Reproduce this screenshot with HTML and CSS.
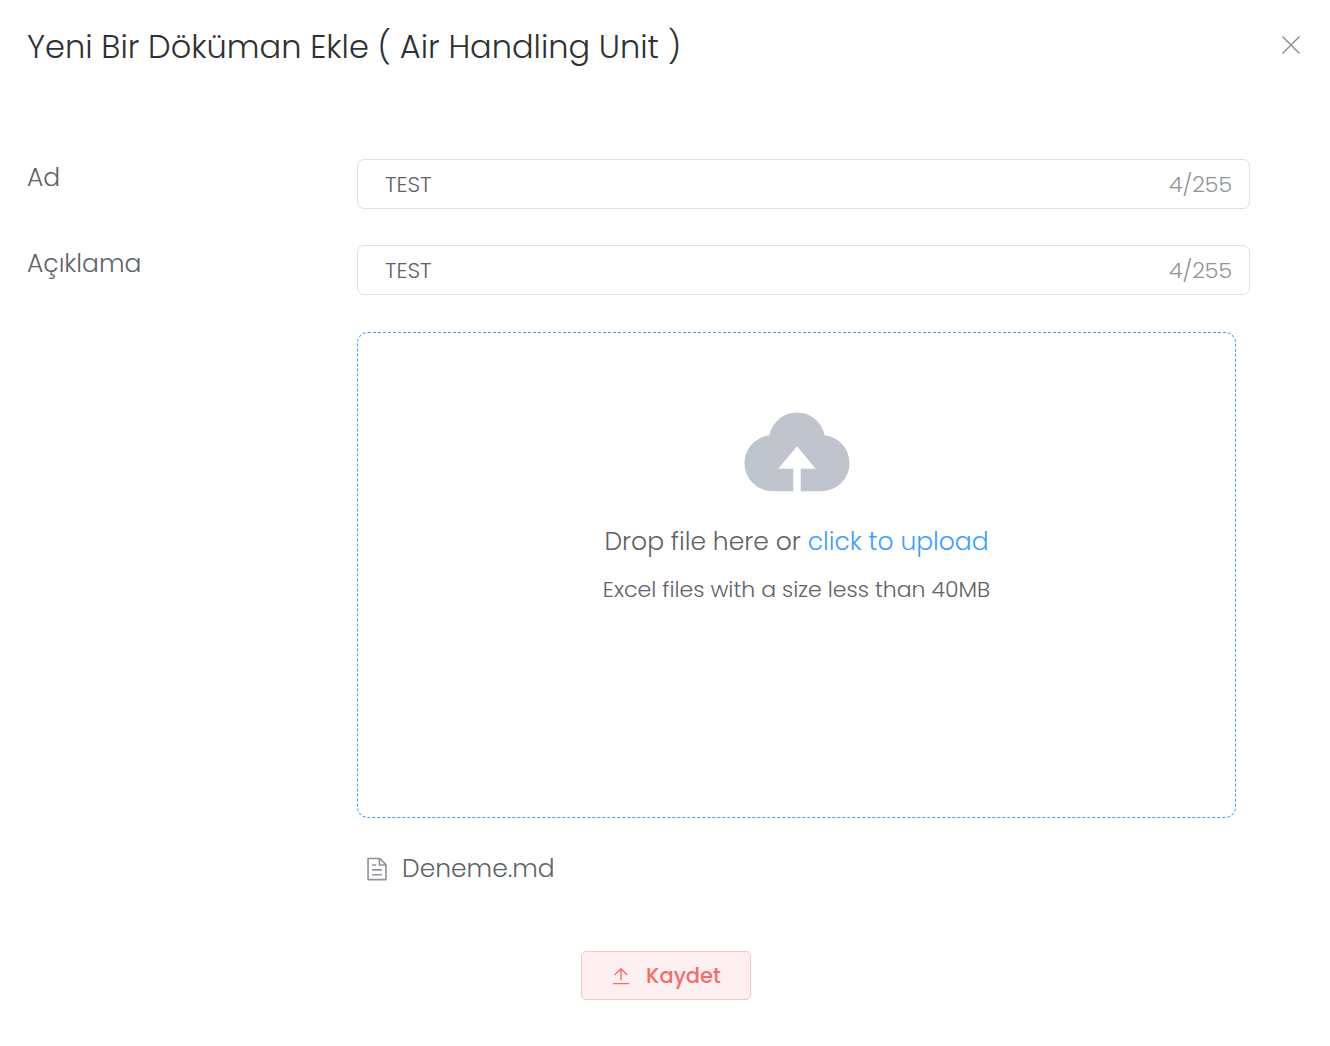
FILE: index.html
```html
<!DOCTYPE html>
<html lang="tr">
<head>
  <meta charset="UTF-8" />
  <meta name="viewport" content="width=device-width, initial-scale=1.0" />
  <title>Yeni Bir Döküman Ekle</title>
  <link rel="stylesheet" href="styles.css">
</head>
<body>
  <header class="dialog-header">
    <h1>Yeni Bir Döküman Ekle ( Air Handling Unit )</h1>
    <button type="button" class="close-btn" aria-label="Kapat">
      <svg viewBox="0 0 20 20" width="20" height="20"><path d="M1.5 1.5l17 17M18.500 1.5l-17 17" /></svg>
    </button>
  </header>
  <form class="dialog-form">
    <div class="form-row">
      <label for="name">Ad</label>
      <div class="input-box">
        <input type="text" id="name" value="TEST" maxlength="255">
        <span class="count">4/255</span>
      </div>
    </div>
    <div class="form-row">
      <label for="description">Açıklama</label>
      <div class="input-box">
        <input type="text" id="description" value="TEST" maxlength="255">
        <span class="count">4/255</span>
      </div>
    </div>

    <div class="upload">
      <label class="dropzone" for="file">
        <svg class="cloud" viewBox="0 0 1024 1024" width="120" height="120"><path d="M544 864V672h128L512 480 352 672h128v192H320v-1.6c-5.376.32-10.496 1.6-16 1.6A240 240 0 0 1 64 624c0-123.136 93.12-223.488 212.608-237.248A239.808 239.808 0 0 1 512 192a239.872 239.872 0 0 1 235.456 194.752c119.488 13.76 212.48 114.112 212.48 237.248a240 240 0 0 1-240 240c-5.376 0-10.56-1.28-16-1.6v1.6H544z" /></svg>
        <span class="drop-text">Drop file here or <em>click to upload</em></span>
        <span class="tip">Excel files with a size less than 40MB</span>
      </label>
      <input type="file" id="file" class="file-input">
      <ul class="file-list">
        <li>
          <svg viewBox="0 0 1024 1024" width="26" height="26"><path d="M832 384H576V128H192v768h640V384zm-26.496-64L640 154.496V320h165.504zM160 64h480l256 256v608a32 32 0 0 1-32 32H160a32 32 0 0 1-32-32V96a32 32 0 0 1 32-32zm160 448h384v64H320v-64zm0-192h160v64H320v-64zm0 384h384v64H320v-64z" /></svg>
          <a href="#file">Deneme.md</a>
        </li>
      </ul>
    </div>

    <button type="button" class="save-btn">
      <svg viewBox="0 0 1024 1024" width="22" height="22"><path d="M160 832h704a32 32 0 1 1 0 64H160a32 32 0 1 1 0-64zm384-578.304V704h-64V247.296L237.248 490.048 192 444.8 508.8 128l316.8 316.8-45.312 45.248L544 253.696z" /></svg>
      Kaydet
    </button>
  </form>
</body>
</html>
```

FILE: styles.css
```css
* {
  box-sizing: border-box;
}
body {
  margin: 0;
  font-family: Poppins, Inter, sans-serif;
  font-weight: 300;
  font-size: 25px;
  color: #606266;
  background: #fff;
}
.dialog-header {
  display: flex;
  justify-content: space-between;
  align-items: flex-start;
  padding: 23px 29px 0 27px;
}
h1 {
  margin: 0;
  font-size: 32px;
  line-height: 48px;
  font-weight: 300;
  color: #303133;
}
.close-btn {
  display: flex;
  padding: 12px 0;
  border: 0;
  background: none;
  cursor: pointer;
}
.close-btn svg {
  fill: none;
  stroke: #909399;
  stroke-width: 1.6;
}
.dialog-form {
  display: flex;
  flex-direction: column;
  padding: 88px 80px 46px 27px;
}
.form-row {
  display: grid;
  grid-template-columns: 330px 1fr;
  margin-bottom: 36px;
}
.form-row label {
  line-height: 38px;
}
.input-box {
  display: flex;
  align-items: center;
  height: 50px;
  padding: 0 17px 0 27px;
  border: 1px solid #dcdfe6;
  border-radius: 7px;
  font-size: 22px;
}
.input-box input {
  flex: 1;
  min-width: 0;
  padding: 0;
  border: 0;
  outline: none;
  background: none;
  font: inherit;
  color: inherit;
}
.count {
  color: #909399;
}
.upload {
  margin: 1px 0 0 330px;
}
.dropzone {
  display: flex;
  flex-direction: column;
  align-items: center;
  margin-right: 14px;
  min-height: 486px;
  padding-top: 57px;
  border: 1px dashed #409eff;
  border-radius: 11px;
  cursor: pointer;
}
.cloud {
  fill: #c0c4cc;
}
.drop-text {
  margin-top: 12px;
  line-height: 40px;
}
.drop-text em {
  font-style: normal;
  color: #409eff;
}
.tip {
  margin-top: 12px;
  font-size: 22px;
  line-height: 32px;
}
.file-input {
  display: none;
}
.file-list {
  margin: 0;
  padding: 32px 7px 0;
  list-style: none;
}
.file-list li {
  display: flex;
  align-items: center;
  gap: 12px;
  line-height: 38px;
}
.file-list svg {
  fill: #909399;
}
.file-list a {
  color: inherit;
  text-decoration: none;
}
.save-btn {
  display: flex;
  align-items: center;
  justify-content: center;
  gap: 14px;
  align-self: center;
  width: 170px;
  height: 49px;
  margin: 63px 0 0 54px;
  border: 1px solid #fbc4c4;
  border-radius: 5px;
  background: #fef0f0;
  color: #f56c6c;
  font: inherit;
  font-size: 21px;
  font-weight: 500;
  cursor: pointer;
}
.save-btn svg {
  fill: currentColor;
}
```
